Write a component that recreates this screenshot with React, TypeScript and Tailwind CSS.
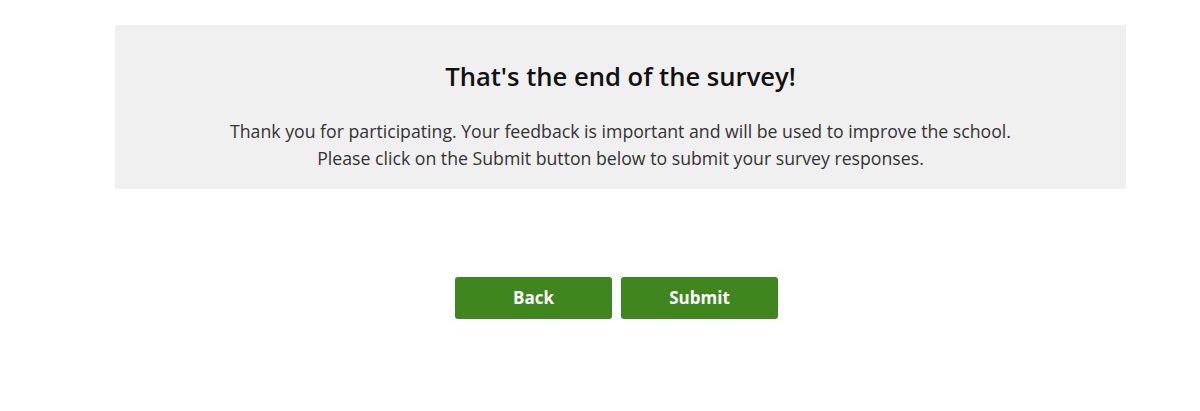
import React from 'react';

const App: React.FC = () => {
  return (
    <div className="min-h-[411px] bg-white pt-[25px] font-['Open_Sans',sans-serif]">
      {/* End of survey message */}
      <div className="ml-[115px] w-[1011px] bg-[#f0f0f0] pt-[32px] pb-[17px] text-center">
        <h2 className="text-[25.6px] font-semibold leading-[40px] text-[#111]">
          That's the end of the survey!
        </h2>
        <p className="mt-[21px] text-[17.7px] leading-[27px] text-[#333]">
          Thank you for participating. Your feedback is important and will be used to improve the school.
          <br />
          Please click on the Submit button below to submit your survey responses.
        </p>
      </div>

      {/* Navigation buttons */}
      <div className="mt-[88px] flex justify-center gap-[9px] pl-[33px]">
        <button className="h-[42px] w-[157px] rounded-[3px] bg-[#3f861e] text-[17px] font-bold text-white">
          Back
        </button>
        <button className="h-[42px] w-[157px] rounded-[3px] bg-[#3f861e] text-[17px] font-bold text-white">
          Submit
        </button>
      </div>
    </div>
  );
};

export default App;
